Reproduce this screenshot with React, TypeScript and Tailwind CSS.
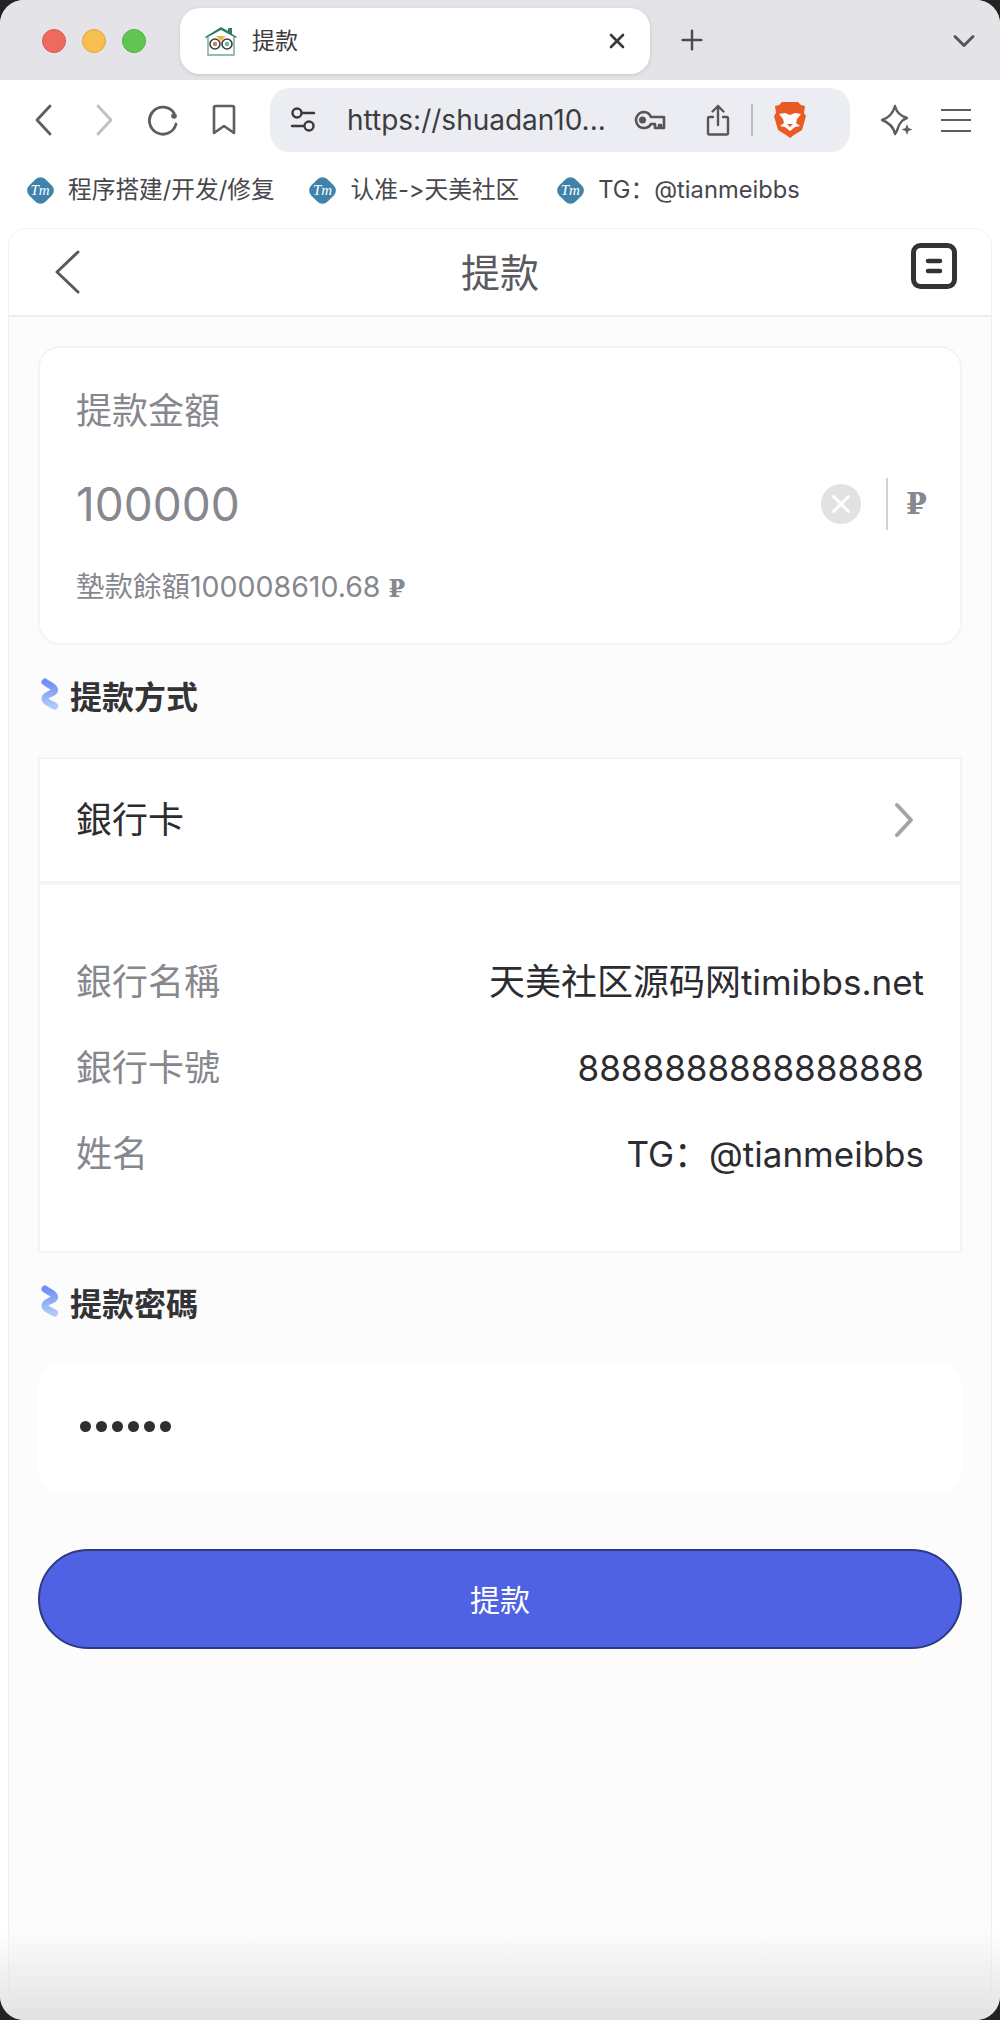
import type { ReactNode } from 'react';
import { ChevronDown, Plus, X } from 'lucide-react';

const font = { fontFamily: 'Inter, "Noto Sans CJK SC", "Noto Sans CJK TC", sans-serif' };

function TmIcon() {
  return (
    <div className="w-[30px] h-[30px] flex items-center justify-center shrink-0">
      <div className="w-[23px] h-[23px] rotate-45 rounded-[7px] bg-[#3f83aa]" />
      <span className="absolute text-white text-[15px] italic leading-none font-['Liberation_Serif',serif]">Tm</span>
    </div>
  );
}

function Bookmark({ label, className }: { label: string; className: string }) {
  return (
    <div className={`relative flex items-center gap-[13px] ${className}`}>
      <TmIcon />
      <span className="text-[23.700px] leading-none text-[#47474c] [font-feature-settings:'calt'_0]">{label}</span>
    </div>
  );
}

function Favicon() {
  return (
    <svg className="w-[34px] h-[32px] shrink-0" viewBox="0 0 34 32">
      <path d="M4 12v18h26V12" fill="#fff" stroke="#6fa994" strokeWidth="1.4" />
      <path d="M1 12 17 2l7 4V3h4v6l5 3-1 1-15-8L2 13z" fill="#2f7d63" />
      <path d="M12 11h10l-5 5z" fill="#e9b93c" />
      <circle cx="11" cy="19" r="5" fill="#fff" stroke="#3c3c3c" strokeWidth="1.6" />
      <circle cx="23" cy="19" r="5" fill="#fff" stroke="#3c3c3c" strokeWidth="1.6" />
      <circle cx="11" cy="19" r="2.2" fill="#c47a7a" />
      <circle cx="23" cy="19" r="2.2" fill="#6fb8a8" />
    </svg>
  );
}

function BraveIcon() {
  return (
    <svg className="w-[32px] h-[36px]" viewBox="0 0 32 36">
      <path d="M8 0h16l3 3 4 1-1 7 2 3-4 14-8 5-4 3-4-3-8-5L0 14l2-3-1-7 4-1z" fill="#ea5b24" />
      <path d="M5 12l6-1 5 2 5-2 6 1-4 5-1 4 4 3-5 1-5 4-5-4-5-1 4-3-1-4z" fill="#fff" />
      <path d="M13 22h6l-3 3z" fill="#ea5b24" />
    </svg>
  );
}

function SectionTitle({ title }: { title: string }) {
  return (
    <div className="flex items-center gap-[8px] h-[32px]">
      <svg className="w-[22px] h-[36px] -mt-[6px] ml-[2px] shrink-0" viewBox="0 0 22 36">
        <defs>
          <linearGradient id="squiggle" x1="0" y1="0" x2="0" y2="1">
            <stop offset="0" stopColor="#6f90f2" />
            <stop offset="1" stopColor="#adc8fb" />
          </linearGradient>
        </defs>
        <path d="M5 5C9 8 15 10 14.500 13.500C14 17 5 17 5 21.500C5 25 11 27 14.500 29" fill="none" stroke="url(#squiggle)" strokeWidth="7" strokeLinecap="round" strokeLinejoin="round" />
      </svg>
      <h2 className="text-[32px] leading-none font-bold text-[#333336]">{title}</h2>
    </div>
  );
}

function InfoRow({ label, children }: { label: string; children: ReactNode }) {
  return (
    <div className="flex items-center justify-between h-[86px]">
      <span className="text-[36px] leading-none text-[#87878e]">{label}</span>
      <span className="text-[35px] leading-none text-[#2c2c30]">{children}</span>
    </div>
  );
}

export default function App() {
  return (
    <div className="h-[2020px] bg-[#222222]" style={font}>
      <div className="relative h-[2020px] overflow-hidden rounded-[24px] bg-white flex flex-col">
        {/* Tab strip */}
        <div className="h-[80px] shrink-0 bg-[#e3e3e8] flex items-start pl-[42px]">
          <div className="flex gap-4 mt-[29px]">
            <div className="w-6 h-6 rounded-full bg-[#ee6a5f] border border-[#d9584e]" />
            <div className="w-6 h-6 rounded-full bg-[#f6bf4f] border border-[#e0a63c]" />
            <div className="w-6 h-6 rounded-full bg-[#61c554] border border-[#52ad47]" />
          </div>
          <div className="ml-[34px] mt-2 w-[470px] h-[66px] bg-white rounded-[20px] shadow-[0_1px_4px_rgba(0,0,0,0.12)] flex items-center pl-6 pr-[21px]">
            <Favicon />
            <span className="ml-[14px] text-[23px] leading-none text-[#3c3c40]">提款</span>
            <X className="ml-auto w-[24px] h-[24px] text-[#38383c]" strokeWidth={2.6} />
          </div>
          <Plus className="ml-[26px] mt-[24px] w-[32px] h-[32px] text-[#4a4a50]" strokeWidth={1.8} />
          <ChevronDown className="ml-[238px] mt-[23px] w-[36px] h-[36px] text-[#55555a]" strokeWidth={2} />
        </div>

        {/* Toolbar */}
        <div className="h-[80px] shrink-0 flex items-center pl-[30px] relative">
          <svg className="w-[28px] h-[36px]" viewBox="0 0 28 36" fill="none" stroke="#5d5d62" strokeWidth="2.800" strokeLinecap="round" strokeLinejoin="round">
            <path d="M20 4 7 18l13 14" />
          </svg>
          <svg className="ml-[32px] w-[28px] h-[36px]" viewBox="0 0 28 36" fill="none" stroke="#c0c0c2" strokeWidth="2.800" strokeLinecap="round" strokeLinejoin="round">
            <path d="M8 4l13 14L8 32" />
          </svg>
          <svg className="ml-[29px] w-[32px] h-[32px]" viewBox="0 0 32 32" fill="none" stroke="#5d5d62" strokeWidth="2.800" strokeLinecap="round">
            <path d="M27 9A13.500 13.500 0 1 0 29 20" />
            <circle cx="27" cy="12" r="2.800" fill="#5d5d62" stroke="none" />
          </svg>
          <svg className="ml-[33px] w-[24px] h-[32px]" viewBox="0 0 24 32" fill="none" stroke="#5d5d62" strokeWidth="2.600" strokeLinejoin="round">
            <path d="M2 3.500Q2 2 3.500 2h17Q22 2 22 3.500V29l-10-7-10 7z" />
          </svg>
          <div className="ml-[34px] w-[580px] h-[64px] bg-[#ecedf2] rounded-[20px] flex items-center pl-[20px]">
            <svg className="w-[26px] h-[26px] shrink-0" viewBox="0 0 26 26" fill="none" stroke="#3a3a3e" strokeWidth="2.400" strokeLinecap="round">
              <circle cx="7" cy="6" r="4.500" />
              <path d="M12 6h12M2 19h12" />
              <circle cx="19" cy="19" r="4.500" />
            </svg>
            <span className="ml-[31px] w-[262px] whitespace-nowrap text-[28px] leading-none text-[#3c3c41]">https://shuadan10...</span>
            <svg className="ml-[24px] w-[33px] h-[20px] shrink-0" viewBox="0 0 33 20" fill="none" stroke="#55555a" strokeWidth="2.600" strokeLinejoin="round">
              <path d="M11 2a8 8 0 1 0 7 12h4v4h4v-3h2v3h3V7H18a8 8 0 0 0-7-5z" />
              <circle cx="9.500" cy="10" r="3.500" fill="#55555a" stroke="none" />
            </svg>
            <svg className="ml-[40px] w-[24px] h-[32px] shrink-0" viewBox="0 0 24 32" fill="none" stroke="#55555a" strokeWidth="2.400" strokeLinecap="round" strokeLinejoin="round">
              <path d="M7 13H3.500Q2 13 2 14.500V29q0 1.500 1.500 1.500h17Q22 30.500 22 29V14.500Q22 13 20.500 13H17M12 21V2M6.500 7.500 12 2l5.500 5.500" />
            </svg>
            <div className="ml-[21px] w-[2px] h-[32px] bg-[#bdbdc2] shrink-0" />
            <div className="ml-[21px] shrink-0 flex"><BraveIcon /></div>
          </div>
          <svg className="ml-[31px] w-[32px] h-[32px]" viewBox="0 0 32 32" fill="none" stroke="#5d5d62" strokeWidth="2.400" strokeLinejoin="round">
            <path d="M14 2q2 9 12 12-3 1-5 3-3 3-4 7-1 3-3 6-2-10-13-14Q11 13 14 2z" />
            <path d="M26 20l1.500 4 4 1.500-4 1.500-1.500 4-1.500-4-4-1.500 4-1.500z" fill="#5d5d62" stroke="none" />
          </svg>
          <div className="ml-[28px] w-[30px] flex flex-col gap-[8.500px]">
            <div className="h-[2px] bg-[#5d5d62]" />
            <div className="h-[2px] bg-[#5d5d62]" />
            <div className="h-[2px] bg-[#5d5d62]" />
          </div>
        </div>

        {/* Bookmarks */}
        <div className="h-[68px] shrink-0 flex items-center pb-[8px]">
          <Bookmark label="程序搭建/开发/修复" className="ml-[25px]" />
          <Bookmark label="认准->天美社区" className="ml-[33px]" />
          <Bookmark label="TG：@tianmeibbs" className="ml-[36px]" />
        </div>

        {/* Page */}
        <div className="mx-[8px] mb-[8px] flex-1 bg-[#fcfcfd] rounded-[18px] border border-[#f1f1f5] overflow-hidden">
          <div className="h-[88px] bg-white border-b-2 border-[#eeeef1] relative flex items-center justify-center">
            <svg className="absolute left-[44px] top-[20px] w-[28px] h-[46px]" viewBox="0 0 28 46" fill="none" stroke="#5a5a5e" strokeWidth="3" strokeLinecap="round" strokeLinejoin="round">
              <path d="M25 3 4 23l21 20" />
            </svg>
            <h1 className="text-[39px] leading-none text-[#5a5a5e]">提款</h1>
            <svg className="absolute right-[34px] top-[14px] w-[46px] h-[46px]" viewBox="0 0 46 46" fill="none" stroke="#333336" strokeLinecap="round">
              <rect x="2.500" y="2.500" width="41" height="41" rx="7" strokeWidth="5" />
              <path d="M17 18h12M17 28h12" strokeWidth="4.500" />
            </svg>
          </div>

          <div className="px-[29px]">
            {/* Amount */}
            <div className="mt-[29px] h-[299px] bg-white border-2 border-[#f4f4f8] rounded-[22px] pl-[36px] pr-[36px] pt-[45px]">
              <div className="text-[36px] leading-none text-[#87878e]">提款金額</div>
              <div className="flex items-center mt-[47px] h-[56px]">
                <span className="text-[46px] leading-none text-[#87878e]">100000</span>
                <div className="ml-auto w-10 h-10 rounded-full bg-[#e2e2e2] flex items-center justify-center">
                  <X className="w-[30px] h-[30px] text-white" strokeWidth={2.4} />
                </div>
                <div className="ml-[25px] w-[2px] h-[52px] bg-[#d2d2d4]" />
                <span className="ml-[18px] w-[18px] text-[30px] leading-none font-bold text-[#87878e] font-['DejaVu_Serif',serif]">₽</span>
              </div>
              <div className="mt-[41px] text-[28.500px] leading-none text-[#87878e]">
                墊款餘額100008610.68 <span className="text-[24px] font-bold font-['DejaVu_Serif',serif]">₽</span>
              </div>
            </div>

            {/* Method */}
            <div className="mt-[37px]">
              <SectionTitle title="提款方式" />
            </div>
            <div className="mt-[43px] bg-white border-2 border-[#f4f4f8]">
              <div className="h-[126px] border-b-4 border-[#f3f3f6] flex items-center justify-between pl-[36px] pr-[46px]">
                <span className="text-[36px] leading-none text-[#2c2c30]">銀行卡</span>
                <svg className="w-[20px] h-[36px]" viewBox="0 0 20 36" fill="none" stroke="#a3a3a8" strokeWidth="4" strokeLinecap="round" strokeLinejoin="round">
                  <path d="M3 3l14 15L3 33" />
                </svg>
              </div>
              <div className="pl-[36px] pr-[36px] pt-[54px] pb-[54px]">
                <InfoRow label="銀行名稱"><span className="text-[36px]">天美社区源码网</span>timibbs.net</InfoRow>
                <InfoRow label="銀行卡號">8888888888888888</InfoRow>
                <InfoRow label="姓名">TG：@tianmeibbs</InfoRow>
              </div>
            </div>

            {/* Password */}
            <div className="mt-[36px]">
              <SectionTitle title="提款密碼" />
            </div>
            <div className="mt-[44px] h-[126px] bg-white rounded-[20px] flex items-center gap-[5px] pl-[42px] pb-[4px]">
              {[0, 1, 2, 3, 4, 5].map((i) => (
                <div key={i} className="w-[11px] h-[11px] rounded-full bg-[#2f2f33]" />
              ))}
            </div>

            {/* Submit */}
            <button className="mt-[58px] w-full h-[100px] rounded-full bg-[#4f62e3] border-2 border-[#2c3a82] text-white text-[30px] leading-none pt-[2px]">提款</button>
          </div>
        </div>

        {/* Bottom fade */}
        <div className="absolute inset-x-0 bottom-0 h-[90px] rounded-b-[24px] bg-gradient-to-b from-white/0 to-[#e2e2e2] pointer-events-none" />
      </div>
    </div>
  );
}
